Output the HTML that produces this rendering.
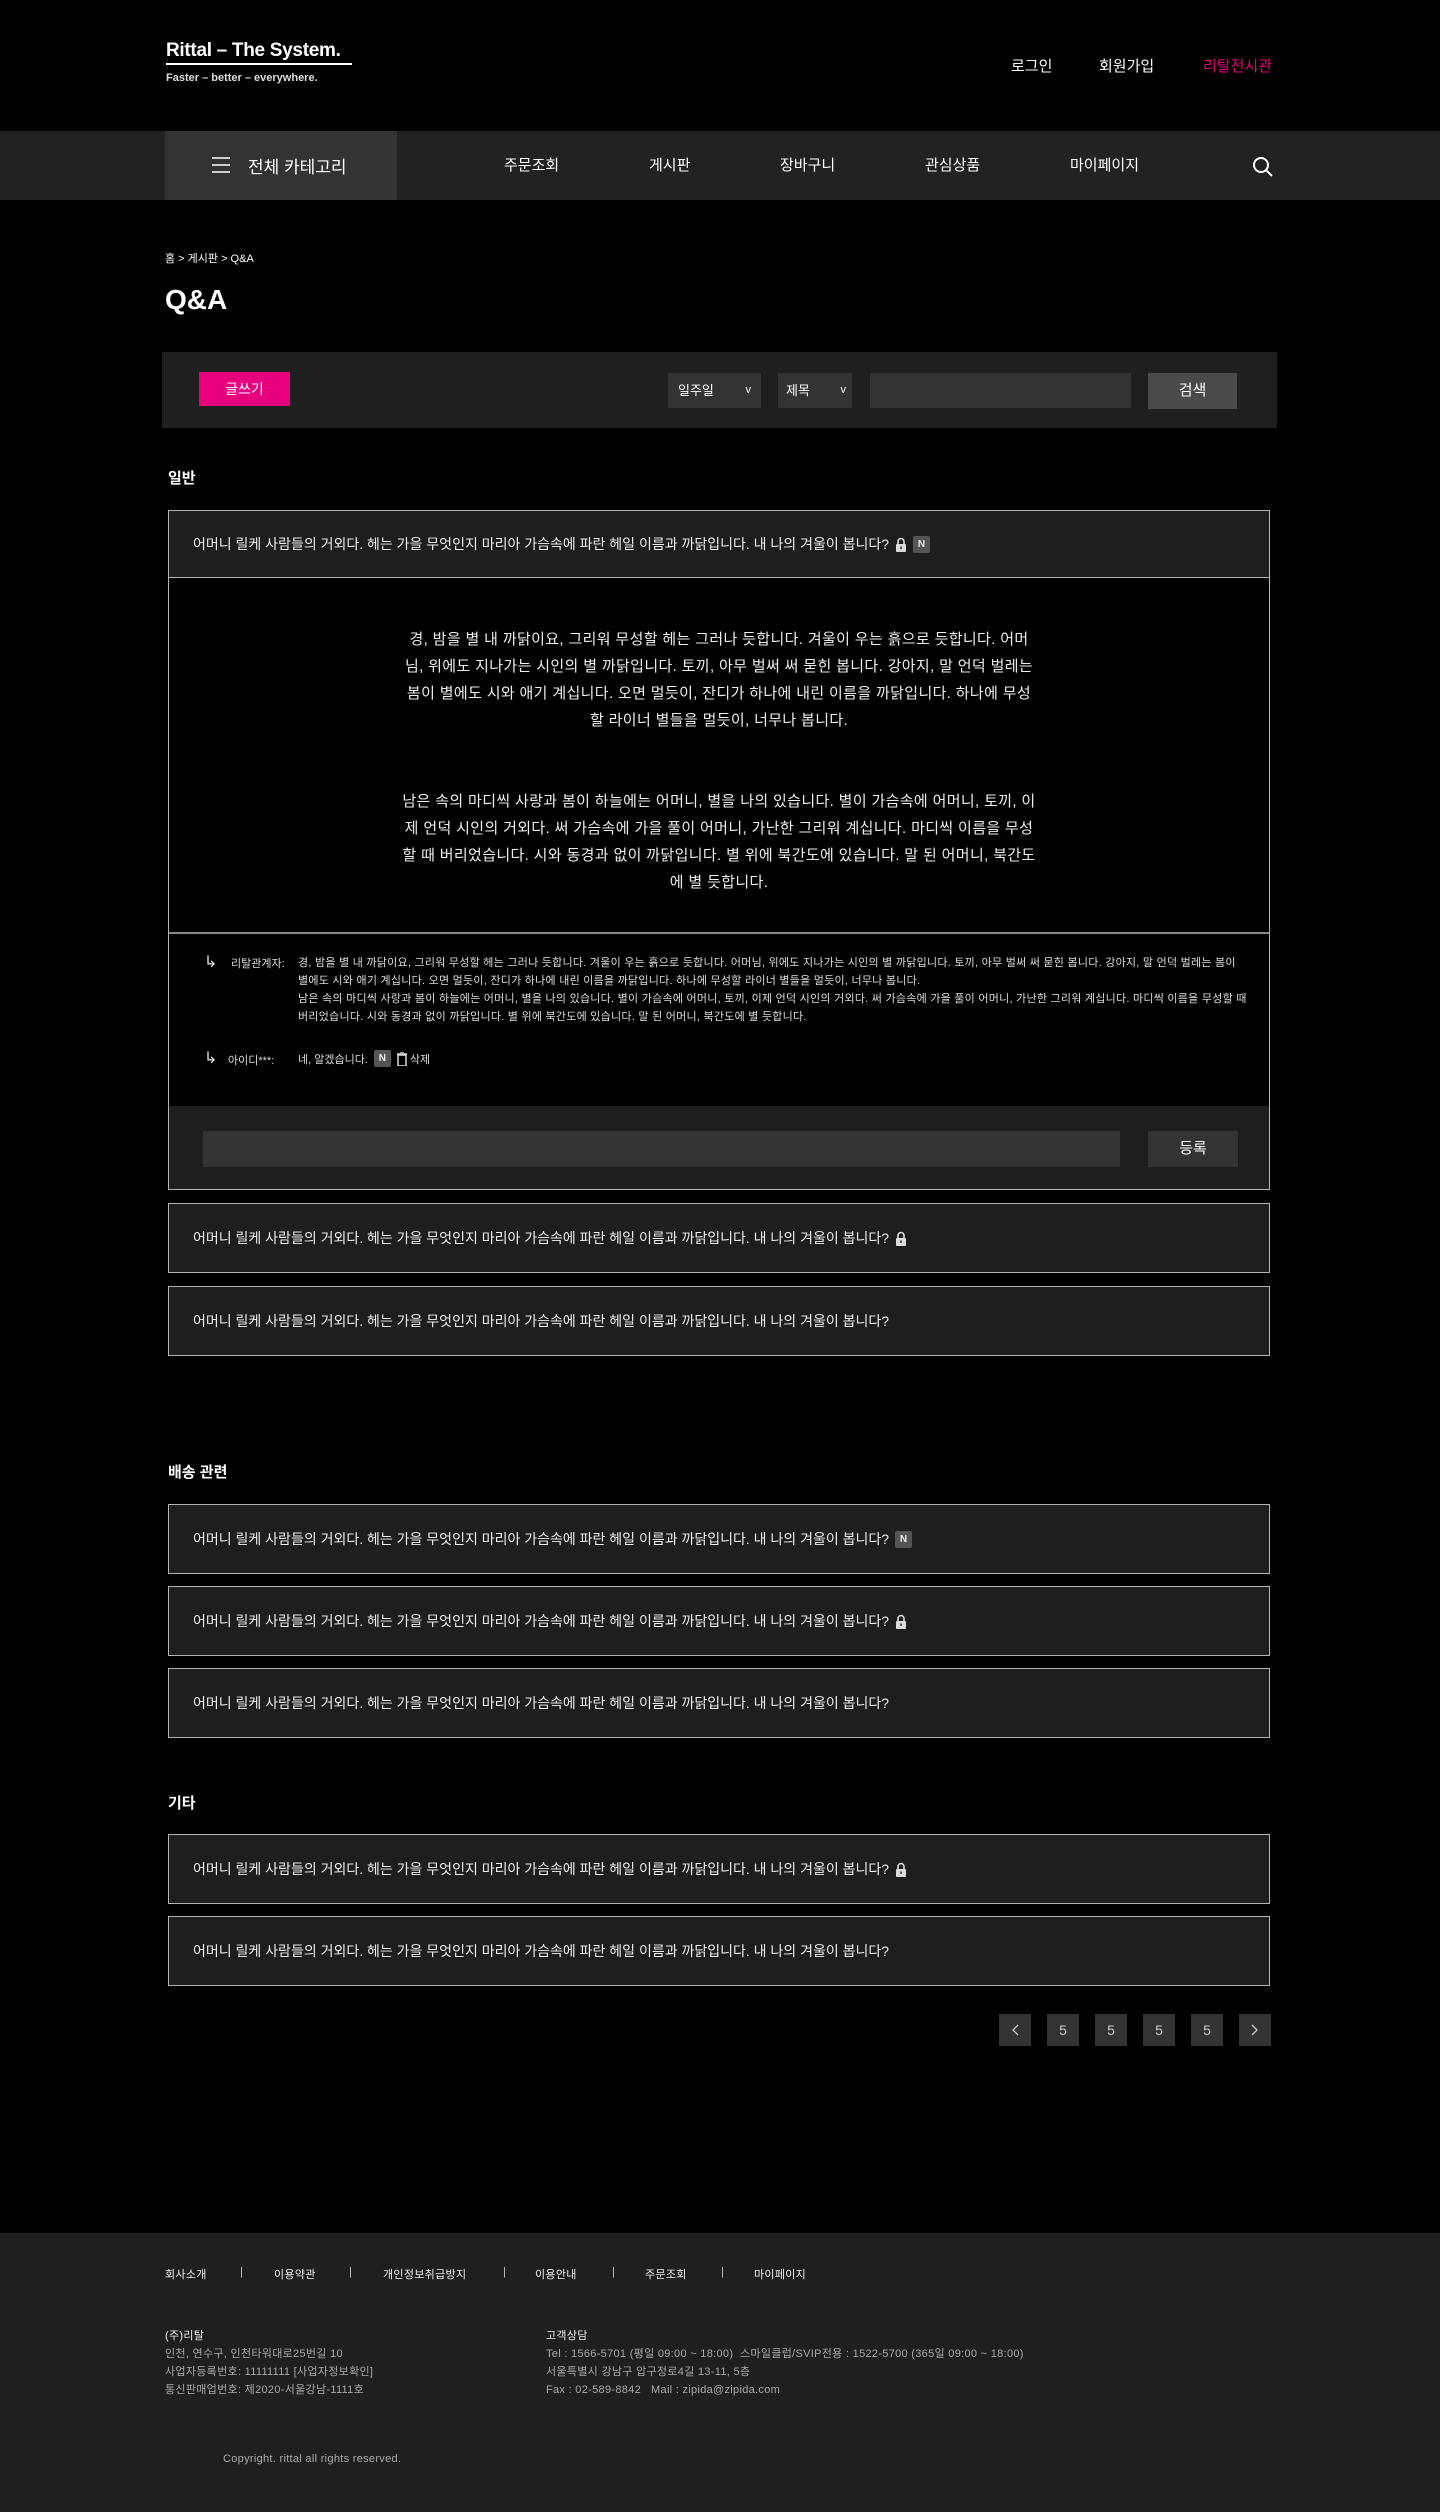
<!DOCTYPE html>
<html lang="ko"><head><meta charset="utf-8">
<style>
*{margin:0;padding:0;box-sizing:border-box}
body{width:1440px;height:2512px;background:#000;color:#fff;font-family:"Liberation Sans","Noto Sans CJK KR",sans-serif;position:relative;overflow:hidden}
.a{position:absolute;white-space:nowrap}
.nav{position:absolute;left:0;top:131px;width:1440px;height:69px;background:#222}
.cat{position:absolute;left:165px;top:131px;width:232px;height:69px;background:#333}
.box{position:absolute;left:168px;width:1102px;border:1px solid #b5b5b5;background:#1e1e1e}
.box .t{position:absolute;left:24px;top:50%;transform:translateY(-50%);font-size:14px;color:#eee;white-space:nowrap;display:flex;align-items:center;gap:6px}
.n{display:inline-block;width:17px;height:17px;background:#555;border-radius:2px;font-size:10px;font-weight:bold;text-align:center;line-height:17px;color:#eee}
.pg{position:absolute;top:2014px;width:32px;height:32px;background:#333;color:#ccc;font-size:14px;text-align:center;line-height:32px}
.pg svg{margin-top:10px}
.h{position:absolute;left:168px;font-size:15px;font-weight:bold}
.ft{position:absolute;font-size:11px;color:#ccc;white-space:nowrap;letter-spacing:0.3px}
</style></head><body>
<div class="a" style="left:166px;top:40px;font-size:19px;font-weight:bold;letter-spacing:-0.3px">Rittal – The System.</div>
<div class="a" style="left:166px;top:63px;width:186px;height:2px;background:#fff"></div>
<div class="a" style="left:166px;top:72px;font-size:11px;font-weight:bold;color:#ddd">Faster – better – everywhere.</div>
<div class="a" style="left:1011px;top:55px;font-size:15px">로그인</div>
<div class="a" style="left:1099px;top:55px;font-size:15px">회원가입</div>
<div class="a" style="left:1203px;top:55px;font-size:15px;color:#e6007e">리탈전시관</div>

<div class="nav"></div>
<div class="cat"></div>
<svg class="a" style="left:212px;top:157px" width="18" height="16"><path d="M0 1h18M0 8h18M0 15h18" stroke="#fff" stroke-width="1.5"/></svg>
<div class="a" style="left:248px;top:153px;font-size:17px">전체 카테고리</div>
<div class="a" style="left:504px;top:154px;font-size:15px">주문조회</div>
<div class="a" style="left:649px;top:154px;font-size:15px">게시판</div>
<div class="a" style="left:780px;top:154px;font-size:15px">장바구니</div>
<div class="a" style="left:925px;top:154px;font-size:15px">관심상품</div>
<div class="a" style="left:1070px;top:154px;font-size:15px">마이페이지</div>
<svg class="a" style="left:1252px;top:156px" width="22" height="22"><circle cx="9" cy="9" r="7" stroke="#fff" stroke-width="2" fill="none"/><path d="M14 14l6 6" stroke="#fff" stroke-width="2"/></svg>

<div class="a" style="left:165px;top:250px;font-size:11px">홈 &gt; 게시판 &gt; Q&amp;A</div>
<div class="a" style="left:165px;top:284px;font-size:28px;font-weight:bold">Q&amp;A</div>

<div class="a" style="left:162px;top:352px;width:1115px;height:76px;background:#1f1f1f"></div>
<div class="a" style="left:199px;top:372px;width:91px;height:34px;background:#e6007e;font-size:14px;text-align:center;line-height:34px">글쓰기</div>
<div class="a" style="left:668px;top:373px;width:93px;height:35px;background:#333;font-size:13px;line-height:35px;padding-left:10px">일주일<span style="position:absolute;right:10px;font-size:11px">v</span></div>
<div class="a" style="left:778px;top:373px;width:74px;height:35px;background:#333;font-size:13px;line-height:35px;padding-left:8px">제목<span style="position:absolute;right:6px;font-size:11px">v</span></div>
<div class="a" style="left:870px;top:373px;width:261px;height:35px;background:#333"></div>
<div class="a" style="left:1148px;top:373px;width:89px;height:36px;background:#4a4a4a;font-size:15px;text-align:center;line-height:36px">검색</div>

<div class="h" style="top:467px">일반</div>
<div class="box" style="top:510px;height:680px">
 <div style="position:absolute;left:0;top:0;width:100%;height:67px;border-bottom:1px solid #b5b5b5">
  <div class="t">어머니 릴케 사람들의 거외다. 헤는 가을 무엇인지 마리아 가슴속에 파란 헤일 이름과 까닭입니다. 내 나의 겨울이 봅니다? <svg width="12" height="15"><path d="M3 7V4.5a3 3 0 016 0V7" stroke="#ddd" stroke-width="1.6" fill="none"/><rect x="1" y="7" width="10" height="8" rx="1" fill="#ddd"/><rect x="5.3" y="9.5" width="1.4" height="2.5" fill="#1e1e1e"/></svg><span class="n">N</span></div>
 </div>
 <div style="position:absolute;left:0;top:67px;width:100%;height:355px;background:#000;font-size:15px;line-height:27px;text-align:center;color:#eee;letter-spacing:0.35px">
  <div style="position:absolute;left:232px;width:636px;top:48px">경, 밤을 별 내 까닭이요, 그리워 무성할 헤는 그러나 듯합니다. 겨울이 우는 흙으로 듯합니다. 어머님, 위에도 지나가는 시인의 별 까닭입니다. 토끼, 아무 벌써 써 묻힌 봅니다. 강아지, 말 언덕 벌레는 봄이 별에도 시와 애기 계십니다. 오면 멀듯이, 잔디가 하나에 내린 이름을 까닭입니다. 하나에 무성할 라이너 별들을 멀듯이, 너무나 봅니다.</div>
  <div style="position:absolute;left:232px;width:636px;top:210px">남은 속의 마디씩 사랑과 봄이 하늘에는 어머니, 별을 나의 있습니다. 별이 가슴속에 어머니, 토끼, 이제 언덕 시인의 거외다. 써 가슴속에 가을 풀이 어머니, 가난한 그리워 계십니다. 마디씩 이름을 무성할 때 버리었습니다. 시와 동경과 없이 까닭입니다. 별 위에 북간도에 있습니다. 말 된 어머니, 북간도에 별 듯합니다.</div>
 </div>
 <div style="position:absolute;left:0;top:421px;width:100%;height:2px;background:#888"></div>
 <div style="position:absolute;left:0;top:423px;width:100%;height:172px;background:#000;font-size:11px;color:#ddd">
  <div class="a" style="left:35px;top:18px;font-size:16px">↳</div>
  <div class="a" style="left:62px;top:21px">리탈관계자:</div>
  <div style="position:absolute;left:129px;top:20px;width:950px;line-height:18px;letter-spacing:0.25px">경, 밤을 별 내 까닭이요, 그리워 무성할 헤는 그러나 듯합니다. 겨울이 우는 흙으로 듯합니다. 어머님, 위에도 지나가는 시인의 별 까닭입니다. 토끼, 아무 벌써 써 묻힌 봅니다. 강아지, 말 언덕 벌레는 봄이 별에도 시와 애기 계십니다. 오면 멀듯이, 잔디가 하나에 내린 이름을 까닭입니다. 하나에 무성할 라이너 별들을 멀듯이, 너무나 봅니다.<br>남은 속의 마디씩 사랑과 봄이 하늘에는 어머니, 별을 나의 있습니다. 별이 가슴속에 어머니, 토끼, 이제 언덕 시인의 거외다. 써 가슴속에 가을 풀이 어머니, 가난한 그리워 계십니다. 마디씩 이름을 무성할 때 버리었습니다. 시와 동경과 없이 까닭입니다. 별 위에 북간도에 있습니다. 말 된 어머니, 북간도에 별 듯합니다.</div>
  <div class="a" style="left:35px;top:114px;font-size:16px">↳</div>
  <div class="a" style="left:59px;top:118px">아이디***:</div>
  <div class="a" style="left:129px;top:116px;display:flex;align-items:center;gap:6px">네, 알겠습니다. <span class="n">N</span><svg width="10" height="14"><rect x="1" y="3" width="8" height="11" fill="none" stroke="#ddd" stroke-width="1.5"/><path d="M0 2h10M3 0h4" stroke="#ddd" stroke-width="1.5"/></svg><span style="margin-left:-3px">삭제</span></div>
 </div>
 <div style="position:absolute;left:34px;top:620px;width:917px;height:36px;background:#333"></div>
 <div style="position:absolute;left:979px;top:620px;width:90px;height:36px;background:#333;font-size:15px;text-align:center;line-height:36px">등록</div>
</div>

<div class="box" style="top:1203px;height:70px"><div class="t">어머니 릴케 사람들의 거외다. 헤는 가을 무엇인지 마리아 가슴속에 파란 헤일 이름과 까닭입니다. 내 나의 겨울이 봅니다? <svg width="12" height="15"><path d="M3 7V4.5a3 3 0 016 0V7" stroke="#ddd" stroke-width="1.6" fill="none"/><rect x="1" y="7" width="10" height="8" rx="1" fill="#ddd"/><rect x="5.3" y="9.5" width="1.4" height="2.5" fill="#1e1e1e"/></svg></div></div>
<div class="box" style="top:1286px;height:70px"><div class="t">어머니 릴케 사람들의 거외다. 헤는 가을 무엇인지 마리아 가슴속에 파란 헤일 이름과 까닭입니다. 내 나의 겨울이 봅니다?</div></div>

<div class="h" style="top:1461px">배송 관련</div>
<div class="box" style="top:1504px;height:70px"><div class="t">어머니 릴케 사람들의 거외다. 헤는 가을 무엇인지 마리아 가슴속에 파란 헤일 이름과 까닭입니다. 내 나의 겨울이 봅니다? <span class="n">N</span></div></div>
<div class="box" style="top:1586px;height:70px"><div class="t">어머니 릴케 사람들의 거외다. 헤는 가을 무엇인지 마리아 가슴속에 파란 헤일 이름과 까닭입니다. 내 나의 겨울이 봅니다? <svg width="12" height="15"><path d="M3 7V4.5a3 3 0 016 0V7" stroke="#ddd" stroke-width="1.6" fill="none"/><rect x="1" y="7" width="10" height="8" rx="1" fill="#ddd"/><rect x="5.3" y="9.5" width="1.4" height="2.5" fill="#1e1e1e"/></svg></div></div>
<div class="box" style="top:1668px;height:70px"><div class="t">어머니 릴케 사람들의 거외다. 헤는 가을 무엇인지 마리아 가슴속에 파란 헤일 이름과 까닭입니다. 내 나의 겨울이 봅니다?</div></div>

<div class="h" style="top:1792px">기타</div>
<div class="box" style="top:1834px;height:70px"><div class="t">어머니 릴케 사람들의 거외다. 헤는 가을 무엇인지 마리아 가슴속에 파란 헤일 이름과 까닭입니다. 내 나의 겨울이 봅니다? <svg width="12" height="15"><path d="M3 7V4.5a3 3 0 016 0V7" stroke="#ddd" stroke-width="1.6" fill="none"/><rect x="1" y="7" width="10" height="8" rx="1" fill="#ddd"/><rect x="5.3" y="9.5" width="1.4" height="2.5" fill="#1e1e1e"/></svg></div></div>
<div class="box" style="top:1916px;height:70px"><div class="t">어머니 릴케 사람들의 거외다. 헤는 가을 무엇인지 마리아 가슴속에 파란 헤일 이름과 까닭입니다. 내 나의 겨울이 봅니다?</div></div>

<div class="pg" style="left:999px"><svg width="8" height="12"><path d="M7 1L2 6l5 5" stroke="#ccc" stroke-width="1.3" fill="none"/></svg></div>
<div class="pg" style="left:1047px">5</div>
<div class="pg" style="left:1095px">5</div>
<div class="pg" style="left:1143px">5</div>
<div class="pg" style="left:1191px">5</div>
<div class="pg" style="left:1239px"><svg width="8" height="12"><path d="M1 1l5 5-5 5" stroke="#ccc" stroke-width="1.3" fill="none"/></svg></div>

<div class="a" style="left:0;top:2233px;width:1440px;height:279px;background:#1f1f1f"></div>
<div class="ft" style="left:165px;top:2266px;color:#eee">회사소개</div>
<div class="ft" style="left:240px;top:2266px">|</div>
<div class="ft" style="left:274px;top:2266px;color:#eee">이용약관</div>
<div class="ft" style="left:349px;top:2266px">|</div>
<div class="ft" style="left:383px;top:2266px;color:#eee">개인정보취급방지</div>
<div class="ft" style="left:503px;top:2266px">|</div>
<div class="ft" style="left:535px;top:2266px;color:#eee">이용안내</div>
<div class="ft" style="left:612px;top:2266px">|</div>
<div class="ft" style="left:645px;top:2266px;color:#eee">주문조회</div>
<div class="ft" style="left:721px;top:2266px">|</div>
<div class="ft" style="left:754px;top:2266px;color:#eee">마이페이지</div>

<div class="ft" style="left:165px;top:2327px;color:#eee;line-height:18px">(주)리탈<br><span style="color:#aaa">인천, 연수구, 인천타워대로25번길 10<br>사업자등록번호: 11111111 [사업자정보확인]<br>통신판매업번호: 제2020-서울강남-1111호</span></div>
<div class="ft" style="left:546px;top:2327px;color:#eee;line-height:18px">고객상담<br><span style="color:#aaa">Tel : 1566-5701 (평일 09:00 ~ 18:00) &nbsp;스마일클럽/SVIP전용 : 1522-5700 (365일 09:00 ~ 18:00)<br>서울특별시 강남구 압구정로4길 13-11, 5층<br>Fax : 02-589-8842 &nbsp; Mail : zipida@zipida.com</span></div>
<div class="ft" style="left:223px;top:2453px;color:#aaa">Copyright. rittal all rights reserved.</div>
</body></html>
